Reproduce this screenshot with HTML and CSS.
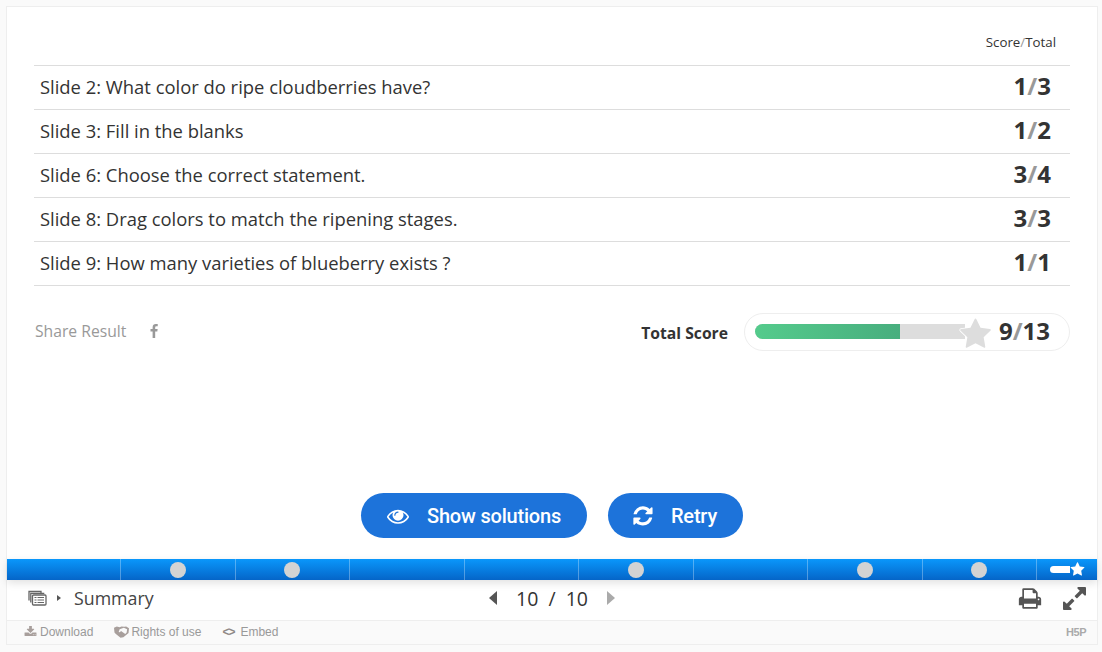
FILE: index.html
```html
<!DOCTYPE html>
<html>
<head>
  <title>Summary</title>
  <meta name="viewport" content="width=device-width, initial-scale=1">
  <link rel="stylesheet" href="styles.css">
</head>
<body>
  <div class="frame">
    <div class="slide">
      <div class="table-head">Score<span class="sep-light">/</span>Total</div>
      <div class="row"><span>Slide 2: What color do ripe cloudberries have?</span><span class="score">1<i>/</i>3</span></div>
      <div class="row"><span>Slide 3: Fill in the blanks</span><span class="score">1<i>/</i>2</span></div>
      <div class="row"><span>Slide 6: Choose the correct statement.</span><span class="score">3<i>/</i>4</span></div>
      <div class="row"><span>Slide 8: Drag colors to match the ripening stages.</span><span class="score">3<i>/</i>3</span></div>
      <div class="row"><span>Slide 9: How many varieties of blueberry exists ?</span><span class="score">1<i>/</i>1</span></div>

      <div class="result">
        <div class="share">
          <span>Share Result</span>
          <svg class="fb" viewBox="448 0 900 1792"><path d="M1343 12v264h-157q-86 0-116 36t-30 108v189h293l-39 296h-254v759h-306v-759h-255v-296h255v-218q0-186 104-288.500t277-102.500q147 0 228 12z"/></svg>
        </div>
        <div class="total">
          <span class="total-label">Total Score</span>
          <div class="total-pill">
            <div class="track"><div class="fill"></div></div>
            <svg class="big-star" viewBox="0 0 1792 1792"><path d="M1728 647q0 22-26 48l-363 354 86 500q1 7 1 20 0 21-10.500 35.500t-30.500 14.500q-19 0-40-12l-449-236-449 236q-22 12-40 12-21 0-31.500-14.500t-10.500-35.500q0-6 2-20l86-500-364-354q-25-27-25-48 0-37 56-46l502-73 225-455q19-41 49-41t49 41l225 455 502 73q56 9 56 46z"/></svg>
            <span class="total-num">9<i>/</i>13</span>
          </div>
        </div>
      </div>

      <div class="actions">
        <button class="btn">
          <svg class="btn-icon eye" viewBox="0 256 1792 1280"><path d="M1664 960q-152-236-381-353 61 104 61 225 0 185-131.500 316.500t-316.500 131.500-316.500-131.500-131.500-316.500q0-121 61-225-229 117-381 353 133 205 333.500 326.500t434.500 121.500 434.500-121.500 333.500-326.500zm-720-384q0-20-14-34t-34-14q-125 0-214.500 89.500t-89.500 214.500q0 20 14 34t34 14 34-14 14-34q0-86 61-147t147-61q20 0 34-14t14-34zm848 384q0 34-20 69-140 230-376.500 368.500t-499.500 138.500-499.500-139-376.500-368q-20-35-20-69t20-69q140-229 376.500-368t499.500-139 499.500 139 376.500 368q20 35 20 69z"/></svg>
          Show solutions
        </button>
        <button class="btn">
          <svg class="btn-icon" viewBox="100 100 1600 1600"><path d="M1639 1056q0 5-1 7-64 268-268 434.500t-478 166.500q-146 0-282.500-55t-243.500-157l-129 129q-19 19-45 19t-45-19-19-45v-448q0-26 19-45t45-19h448q26 0 45 19t19 45-19 45l-137 137q71 66 161 102t187 36q134 0 250-65t186-179q11-17 53-117 8-23 30-23h192q13 0 22.500 9.500t9.500 22.500zm25-800v448q0 26-19 45t-45 19h-448q-26 0-45-19t-19-45 19-45l138-138q-148-137-349-137-134 0-250 65t-186 179q-11 17-53 117-8 23-30 23h-199q-13 0-22.500-9.500t-9.500-22.500v-7q65-268 270-434.500t480-166.500q146 0 284 55.500t245 156.500l130-129q19-19 45-19t45 19 19 45z"/></svg>
          Retry
        </button>
      </div>
    </div>

    <div class="progress">
      <div class="seg first"></div>
      <div class="seg"><b class="dot"></b></div>
      <div class="seg"><b class="dot"></b></div>
      <div class="seg"></div>
      <div class="seg"></div>
      <div class="seg"><b class="dot"></b></div>
      <div class="seg"></div>
      <div class="seg"><b class="dot"></b></div>
      <div class="seg"><b class="dot"></b></div>
      <div class="seg last">
        <span class="mini-bar"></span>
        <svg class="mini-star" viewBox="0 0 1792 1792"><path d="M1728 647q0 22-26 48l-363 354 86 500q1 7 1 20 0 21-10.500 35.500t-30.500 14.500q-19 0-40-12l-449-236-449 236q-22 12-40 12-21 0-31.500-14.500t-10.500-35.500q0-6 2-20l86-500-364-354q-25-27-25-48 0-37 56-46l502-73 225-455q19-41 49-41t49 41l225 455 502 73q56 9 56 46z"/></svg>
      </div>
    </div>

    <div class="nav">
      <div class="nav-left">
        <svg class="slides-icon" viewBox="0 0 19 16"><g fill="none" stroke="#666" stroke-width="1.300"><path d="M1 10.500V1.500h12v1.500"/><path d="M2.800 12.500V3.300h13.500"/><rect x="4.500" y="5" width="13.500" height="10" rx="1"/></g><path fill="#666" d="M6.500 7h2v1h-2zM9.500 7h6.500v1H9.500zM6.500 9.500h2v1h-2zM9.500 9.500h6.500v1H9.500zM6.500 12h2v1h-2zM9.500 12h6.500v1H9.500z"/></svg>
        <span class="caret"></span>
        <span class="nav-title">Summary</span>
      </div>
      <div class="pager">
        <span class="arrow prev"></span>
        <span class="pages">10 &nbsp;/&nbsp; 10</span>
        <span class="arrow next"></span>
      </div>
      <div class="nav-right">
        <svg class="print" viewBox="0 128 1792 1536"><path d="M448 1536h896v-256h-896v256zm0-640h896v-384h-160q-40 0-68-28t-28-68v-160h-640v640zm1152 64q0-26-19-45t-45-19-45 19-19 45 19 45 45 19 45-19 19-45zm128 0v416q0 13-9.500 22.500t-22.500 9.500h-224v160q0 40-28 68t-68 28h-960q-40 0-68-28t-28-68v-160h-224q-13 0-22.500-9.500t-9.500-22.500v-416q0-79 56.500-135.500t135.500-56.500h64v-544q0-40 28-68t68-28h672q40 0 88 20t76 48l152 152q28 28 48 76t20 88v256h64q79 0 135.500 56.500t56.500 135.500z"/></svg>
        <svg class="expand" viewBox="128 128 1536 1536"><path d="M883 1056q0 13-10 23l-332 332 144 144q19 19 19 45t-19 45-45 19h-448q-26 0-45-19t-19-45v-448q0-26 19-45t45-19 45 19l144 144 332-332q10-10 23-10t23 10l114 114q10 10 10 23zm781-864v448q0 26-19 45t-45 19-45-19l-144-144-332 332q-10 10-23 10t-23-10l-114-114q-10-10-10-23t10-23l332-332-144-144q-19-19-19-45t19-45 45-19h448q26 0 45 19t19 45z"/></svg>
      </div>
    </div>

    <div class="foot">
      <div class="foot-links">
        <span class="foot-link"><svg class="foot-icon" viewBox="0 128 1792 1536"><path d="M1344 1344q0-26-19-45t-45-19-45 19-19 45 19 45 45 19 45-19 19-45zm256 0q0-26-19-45t-45-19-45 19-19 45 19 45 45 19 45-19 19-45zm128-224v320q0 40-28 68t-68 28h-1472q-40 0-68-28t-28-68v-320q0-40 28-68t68-28h465l135 136q58 56 136 56t136-56l136-136h464q40 0 68 28t28 68zm-325-569q17 41-14 70l-448 448q-18 19-45 19t-45-19l-448-448q-31-29-14-70 17-39 59-39h256v-448q0-26 19-45t45-19h256q26 0 45 19t19 45v448h256q42 0 59 39z"/></svg>Download</span>
        <span class="foot-link"><svg class="foot-icon hands" viewBox="0 0 16 12"><path d="M0 1.500L3 0l3 1 2-.8 3 .3L13 0l3 2-.5 5-5.500 4.500L7 12 2 8 .5 6.500zM6 3L5 6c1 .5 2 0 2.500-1L12 8l1.500-1.500.5-3.500-3.500-1.500z"/></svg>Rights of use</span>
        <span class="foot-link"><span class="code">&lt;&gt;</span>Embed</span>
      </div>
      <span class="h5p">H5P</span>
    </div>
  </div>
</body>
</html>
```

FILE: styles.css
```css
html, body {
  height: 100%;
}
body {
  margin: 0;
  padding: 6px 4px 7px 6px;
  box-sizing: border-box;
  background-color: #fafafa;
  font-family: "Open Sans", sans-serif;
  color: #333;
}
.frame {
  border: 1px solid #eeeeee;
  background-color: #fff;
  width: 1090px;
  height: 637px;
  display: flex;
  flex-direction: column;
}
i {
  font-style: normal;
  color: #999;
}

/* Score table */
.slide {
  height: 552px;
  padding: 0 27px;
  display: flex;
  flex-direction: column;
}
.table-head {
  height: 59px;
  padding: 20px 14px 0 0;
  box-sizing: border-box;
  border-bottom: 1px solid #dddddd;
  text-align: right;
  font-size: 13.300px;
  line-height: 30px;
}
.sep-light {
  color: #999;
}
.row {
  height: 44px;
  padding: 0 19px 2px 6px;
  box-sizing: border-box;
  border-bottom: 1px solid #dddddd;
  display: flex;
  justify-content: space-between;
  align-items: center;
  font-size: 18.400px;
}
.score {
  font-size: 24px;
  font-weight: 700;
  margin-top: -2px;
}

/* Share and total score */
.result {
  margin-top: 27px;
  height: 38px;
  display: flex;
  justify-content: space-between;
  align-items: center;
}
.share {
  display: flex;
  align-items: center;
  gap: 24px;
  font-size: 15.700px;
  color: #999;
  margin: -2px 0 0 1px;
}
.fb {
  width: 8px;
  height: 15px;
  fill: #999;
}
.total {
  display: flex;
  align-items: center;
  gap: 16px;
}
.total-label {
  font-size: 15.700px;
  font-weight: 700;
  margin-top: 2px;
}
.total-pill {
  position: relative;
  width: 326px;
  height: 38px;
  box-sizing: border-box;
  border: 1px solid #eeeeee;
  border-radius: 19px;
  padding: 0 19px 0 10px;
  display: flex;
  justify-content: space-between;
  align-items: center;
}
.track {
  width: 210px;
  height: 15px;
  margin-top: -1px;
  background-color: #dddddd;
  border-radius: 8px 0 0 8px;
  overflow: hidden;
}
.fill {
  width: 145px;
  height: 100%;
  background: linear-gradient(to right, #54cb8c, #48ae7e);
}
.big-star {
  position: absolute;
  left: 214px;
  top: 4px;
  width: 33px;
  height: 33px;
  fill: #dddddd;
  stroke: #fff;
  stroke-width: 90;
  paint-order: stroke;
}
.total-num {
  font-size: 24px;
  font-weight: 700;
  margin-top: -4px;
}

/* Buttons */
.actions {
  margin-top: 142px;
  display: flex;
  justify-content: center;
  gap: 21px;
}
.btn {
  height: 45px;
  padding: 0 26px 0 25px;
  border: none;
  border-radius: 23px;
  background-color: #1d73da;
  color: #fff;
  font-family: Roboto, sans-serif;
  font-size: 20px;
  font-weight: 500;
  letter-spacing: -0.2px;
  display: flex;
  align-items: center;
  gap: 18px;
}
.btn-icon {
  width: 20px;
  height: 20px;
  fill: #fff;
}
.eye {
  width: 22px;
  height: 16px;
  margin-left: 1px;
}

/* Progress bar */
.progress {
  height: 21px;
  display: flex;
  background: linear-gradient(to bottom, #0a97fb, #0565c8);
  position: relative;
  box-shadow: 0 3px 8px rgba(0, 0, 0, 0.12);
}
.seg {
  flex: 0 0 114.500px;
  box-sizing: border-box;
  display: flex;
  justify-content: center;
  align-items: center;
  border-left: 1px solid rgba(255, 255, 255, 0.3);
}
.seg.first {
  flex-basis: 113.200px;
  border-left: none;
}
.seg.last {
  flex: 1;
}
.dot {
  width: 16px;
  height: 16px;
  border-radius: 50%;
  background-color: #d3d3d3;
}
.mini-bar {
  width: 20px;
  height: 7px;
  border-radius: 4px 0 0 4px;
  background-color: #fff;
}
.mini-star {
  width: 15px;
  height: 15px;
  fill: #fff;
}

/* Navigation */
.nav {
  height: 40px;
  box-sizing: border-box;
  padding: 0 11px 4px 21px;
  display: grid;
  grid-template-columns: 1fr auto 1fr;
  align-items: center;
}
.nav-left {
  display: flex;
  align-items: center;
}
.slides-icon {
  width: 19px;
  height: 16px;
}
.caret {
  margin-left: 10px;
  border-left: 4px solid #555;
  border-top: 3px solid transparent;
  border-bottom: 3px solid transparent;
}
.nav-title {
  margin-left: 13px;
  font-size: 17.800px;
  color: #444;
}
.pager {
  display: flex;
  align-items: center;
  gap: 19px;
  font-size: 19.500px;
  color: #333;
  margin-left: -10px;
}
.arrow {
  border-top: 7px solid transparent;
  border-bottom: 7px solid transparent;
}
.prev {
  border-right: 8px solid #555;
}
.next {
  border-left: 8px solid #aaa;
}
.nav-right {
  display: flex;
  justify-content: flex-end;
  align-items: center;
  gap: 21px;
}
.print {
  width: 24px;
  height: 21px;
  fill: #555;
}
.expand {
  width: 23px;
  height: 23px;
  fill: #555;
}

/* Footer */
.foot {
  flex: 1;
  box-sizing: border-box;
  border-top: 1px solid #eeeeee;
  background-color: #fafafa;
  padding: 0 11px 2px 17px;
  display: flex;
  justify-content: space-between;
  align-items: center;
}
.foot-links {
  display: flex;
  gap: 21px;
}
.foot-link {
  display: flex;
  align-items: center;
  gap: 3px;
  font-family: "Liberation Sans", sans-serif;
  font-size: 12px;
  color: #999;
}
.foot-icon {
  width: 13px;
  height: 11px;
  fill: #a89f9c;
}
.hands {
  width: 15px;
  height: 12px;
  margin-right: -1px;
}
.code {
  font-weight: 700;
  color: #8f8886;
  letter-spacing: -1px;
  margin-right: 3px;
}
.h5p {
  font-family: "Liberation Sans", sans-serif;
  font-size: 11px;
  font-weight: 700;
  color: #aaa;
  letter-spacing: -0.5px;
}
```
